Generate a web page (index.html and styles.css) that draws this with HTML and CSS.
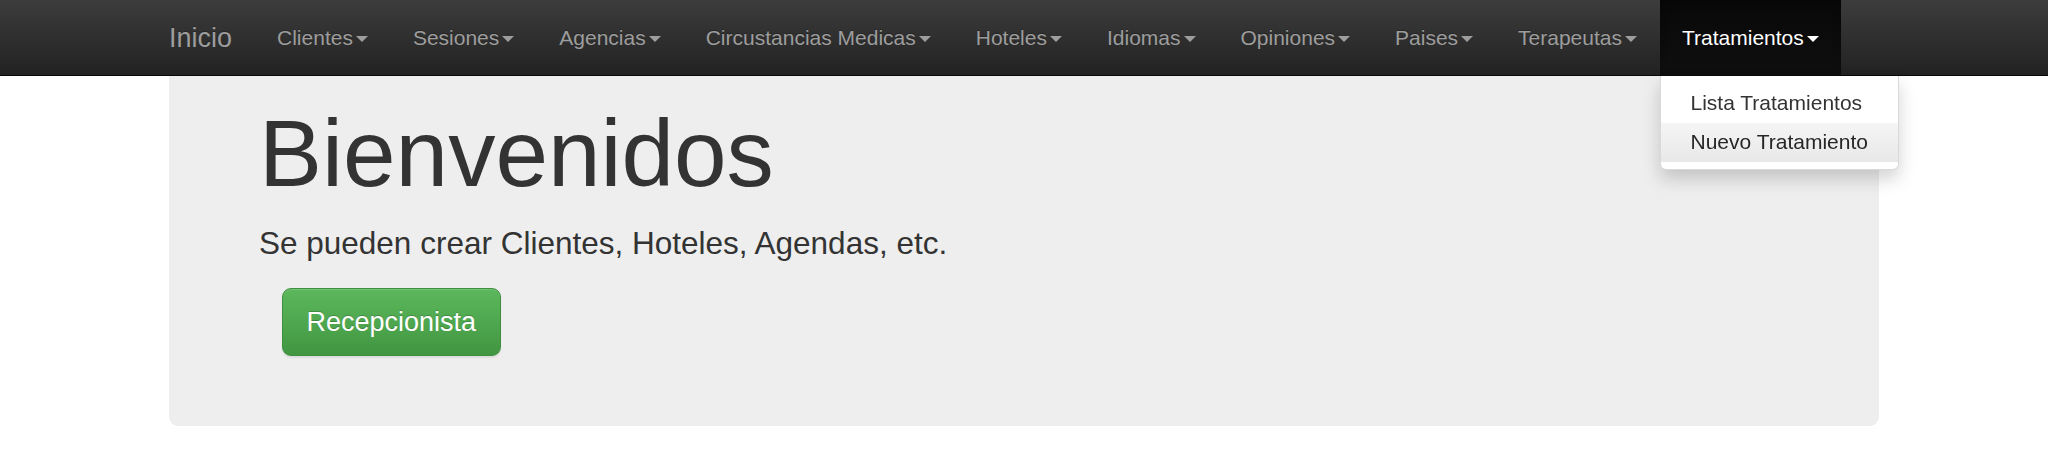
FILE: index.html
```html
<!DOCTYPE html>
<html lang="es">
<head>
<meta charset="utf-8">
<title>Inicio</title>
<link rel="stylesheet" href="styles.css">
</head>
<body>
<nav class="navbar">
  <div class="container nav-inner">
    <a class="brand" href="#">Inicio</a>
    <ul class="nav">
      <li><a href="#">Clientes<span class="caret"></span></a></li>
      <li><a href="#">Sesiones<span class="caret"></span></a></li>
      <li><a href="#">Agencias<span class="caret"></span></a></li>
      <li><a href="#">Circustancias Medicas<span class="caret"></span></a></li>
      <li><a href="#">Hoteles<span class="caret"></span></a></li>
      <li><a href="#">Idiomas<span class="caret"></span></a></li>
      <li><a href="#">Opiniones<span class="caret"></span></a></li>
      <li><a href="#">Paises<span class="caret"></span></a></li>
      <li><a href="#">Terapeutas<span class="caret"></span></a></li>
      <li class="open">
        <a href="#">Tratamientos<span class="caret"></span></a>
        <ul class="dropdown">
          <li><a href="#">Lista Tratamientos</a></li>
          <li class="hover"><a href="#">Nuevo Tratamiento</a></li>
        </ul>
      </li>
    </ul>
  </div>
</nav>
<div class="container">
  <div class="jumbotron">
    <h1>Bienvenidos</h1>
    <p>Se pueden crear Clientes, Hoteles, Agendas, etc.</p>
    <div class="actions"><a class="btn" href="#">Recepcionista</a></div>
  </div>
</div>
</body>
</html>
```

FILE: styles.css
```css
* { box-sizing: border-box; }
html, body { margin: 0; padding: 0; }
body {
  font-family: "Liberation Sans", Arial, sans-serif;
  font-size: 21px;
  line-height: 30px;
  color: #333;
  background: #fff;
}
a { text-decoration: none; }
ul { list-style: none; margin: 0; padding: 0; }

.container {
  width: 1755px;
  margin: 0 auto;
  padding: 0 22.5px;
}

.navbar {
  position: fixed;
  top: 0;
  left: 0;
  right: 0;
  z-index: 10;
  height: 76px;
  background-image: linear-gradient(to bottom, #3c3c3c 0, #222 100%);
  border-bottom: 1.5px solid #080808;
}
.nav-inner {
  display: flex;
  align-items: flex-start;
}
.brand {
  margin-left: -22.5px;
  padding: 22.5px;
  height: 75px;
  font-size: 27px;
  line-height: 30px;
  color: #9d9d9d;
  text-shadow: 0 -1px 0 rgba(0,0,0,.25);
}
.nav {
  display: flex;
}
.nav > li {
  position: relative;
}
.nav > li > a {
  display: block;
  padding: 22.5px;
  height: 75px;
  line-height: 30px;
  color: #9d9d9d;
  text-shadow: 0 -1px 0 rgba(0,0,0,.25);
}
.caret {
  display: inline-block;
  width: 0;
  height: 0;
  margin-left: 3px;
  vertical-align: middle;
  border-top: 6px solid;
  border-left: 6px solid transparent;
  border-right: 6px solid transparent;
}
.nav > li.open > a {
  color: #fff;
  background-image: linear-gradient(to bottom, #080808 0, #0f0f0f 100%);
  box-shadow: inset 0 3px 9px rgba(0,0,0,.25);
}

.dropdown {
  position: absolute;
  top: 76px;
  left: 0;
  min-width: 238.5px;
  padding: 7.5px 0;
  background: #fff;
  border: 1.5px solid rgba(0,0,0,.15);
  border-top: 0;
  border-radius: 0 0 6px 6px;
  box-shadow: 0 9px 18px rgba(0,0,0,.175);
}
.dropdown li a {
  display: block;
  padding: 4.5px 30px;
  line-height: 30px;
  color: #333;
  white-space: nowrap;
}
.dropdown li.hover a {
  color: #262626;
  background-image: linear-gradient(to bottom, #f5f5f5 0, #e8e8e8 100%);
}

.jumbotron {
  background: #eee;
  border-radius: 9px;
  padding: 72px 90px 70px;
  margin-bottom: 45px;
}
.jumbotron h1 {
  margin: 30px 0 15px;
  font-size: 94.5px;
  line-height: 1.1;
  font-weight: 500;
  color: #333;
}
.jumbotron p {
  margin: 0 0 22.5px;
  font-size: 31.5px;
  line-height: 45px;
}
.actions {
  padding-left: 22.5px;
}
.btn {
  display: inline-block;
  padding: 15px 24px;
  font-size: 27px;
  line-height: 36px;
  color: #fff;
  border: 1.5px solid #3e8f3e;
  border-radius: 9px;
  background-image: linear-gradient(to bottom, #5cb85c 0, #419641 100%);
  text-shadow: 0 -1px 0 rgba(0,0,0,.2);
  box-shadow: inset 0 1px 0 rgba(255,255,255,.15), 0 1.5px 1.5px rgba(0,0,0,.075);
}
```
